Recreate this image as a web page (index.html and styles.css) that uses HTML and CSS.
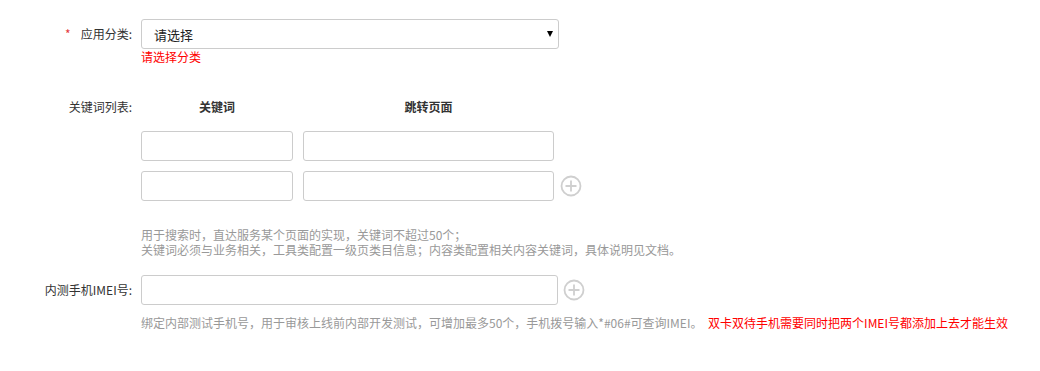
FILE: index.html
```html
<!DOCTYPE html>
<html lang="zh">
<head>
<meta charset="utf-8">
<title>表单</title>
<link rel="stylesheet" href="styles.css">
</head>
<body>
<form class="form">
  <div class="row">
    <label class="label"><span class="req">*</span>应用分类:</label>
    <div class="control">
      <div class="select-wrap">
        <select class="select"><option>请选择</option></select>
        <span class="arrow"></span>
      </div>
      <div class="error">请选择分类</div>
    </div>
  </div>

  <div class="row row-keywords">
    <label class="label label-kw">关键词列表:</label>
    <div class="control">
      <div class="kw-head">
        <div class="col-k">关键词</div>
        <div class="col-p">跳转页面</div>
      </div>
      <div class="kw-rows">
        <div class="kw-row">
          <input class="input col-k" type="text">
          <input class="input col-p" type="text">
        </div>
        <div class="kw-row">
          <input class="input col-k" type="text">
          <input class="input col-p" type="text">
          <span class="plus">
            <svg width="22" height="22" viewBox="0 0 22 22"><circle cx="11" cy="11" r="9.5" fill="none" stroke="#cfcfcf" stroke-width="1.8"/><path d="M11 5.5v11M5.5 11h11" stroke="#cfcfcf" stroke-width="1.8"/></svg>
          </span>
        </div>
      </div>
      <div class="help help-kw">
        <div class="help-line">用于搜索时，直达服务某个页面的实现，关键词不超过50个；</div>
        <div class="help-line">关键词必须与业务相关，工具类配置一级页类目信息；内容类配置相关内容关键词，具体说明见文档。</div>
      </div>
    </div>
  </div>

  <div class="row row-imei">
    <label class="label label-input">内测手机IMEI号:</label>
    <div class="control">
      <div class="imei-row">
        <input class="input imei" type="text">
        <span class="plus plus-imei">
          <svg width="22" height="22" viewBox="0 0 22 22"><circle cx="11" cy="11" r="9.5" fill="none" stroke="#cfcfcf" stroke-width="1.8"/><path d="M11 5.5v11M5.5 11h11" stroke="#cfcfcf" stroke-width="1.8"/></svg>
        </span>
      </div>
      <div class="help help-imei">绑定内部测试手机号，用于审核上线前内部开发测试，可增加最多50个，手机拨号输入*#06#可查询IMEI。 <span class="warn">双卡双待手机需要同时把两个IMEI号都添加上去才能生效</span></div>
    </div>
  </div>
</form>
</body>
</html>
```
FILE: styles.css
```css
html, body {
  margin: 0;
  padding: 0;
  background: #fff;
}
body {
  font-family: "Noto Sans CJK SC", "Liberation Sans", sans-serif;
  font-size: 12px;
  color: #333;
}
.form {
  padding-top: 19px;
}
.row {
  display: flex;
  align-items: flex-start;
}
.label {
  width: 132px;
  margin-right: 9px;
  text-align: right;
  line-height: 30px;
  color: #333;
  flex: none;
}
.req {
  color: #e4393c;
  margin-right: 10px;
  font-size: 12px;
}
.control {
  display: flex;
  flex-direction: column;
}
.select-wrap {
  position: relative;
  width: 418px;
  height: 30px;
}
.select {
  appearance: none;
  -webkit-appearance: none;
  width: 418px;
  height: 30px;
  box-sizing: border-box;
  border: 1px solid #ccc;
  border-radius: 3px;
  background: #fff;
  padding: 0 12px;
  font-family: "Noto Sans CJK SC", "Liberation Sans", sans-serif;
  font-size: 13px;
  color: #222;
  outline: none;
}
.arrow {
  position: absolute;
  left: 406px;
  top: 12px;
  width: 0;
  height: 0;
  border-left: 3.5px solid transparent;
  border-right: 3.5px solid transparent;
  border-top: 6px solid #000;
}
.error {
  color: #f00;
  line-height: 16px;
  font-size: 12px;
}
.row-keywords {
  margin-top: 30px;
}
.label-kw {
  line-height: 24px;
}
.kw-head {
  display: flex;
  gap: 10px;
  height: 24px;
  line-height: 24px;
  font-weight: bold;
  color: #333;
  margin-bottom: 12px;
}
.kw-head > div {
  text-align: center;
}
.kw-rows {
  display: flex;
  flex-direction: column;
  gap: 10px;
}
.kw-row {
  display: flex;
  align-items: center;
  gap: 10px;
}
.col-k {
  width: 152px;
}
.col-p {
  width: 251px;
}
.input {
  box-sizing: border-box;
  height: 30px;
  border: 1px solid #ccc;
  border-radius: 3px;
  background: #fff;
  outline: none;
  padding: 0 8px;
  margin: 0;
}
.plus {
  display: inline-flex;
  width: 22px;
  height: 22px;
  margin-left: -4px;
}
.help {
  color: #999;
  font-size: 12px;
}
.help-kw {
  margin-top: 26px;
}
.help-line {
  height: 15px;
  line-height: 15px;
  white-space: nowrap;
}
.row-imei {
  margin-top: 18px;
}
.imei-row {
  display: flex;
  align-items: center;
}
.imei {
  width: 417px;
}
.plus-imei {
  margin-left: 5px;
}
.help-imei {
  margin-top: 10px;
  line-height: 16px;
  white-space: nowrap;
}
.warn {
  color: #f00;
  margin-left: 3px;
}
```
